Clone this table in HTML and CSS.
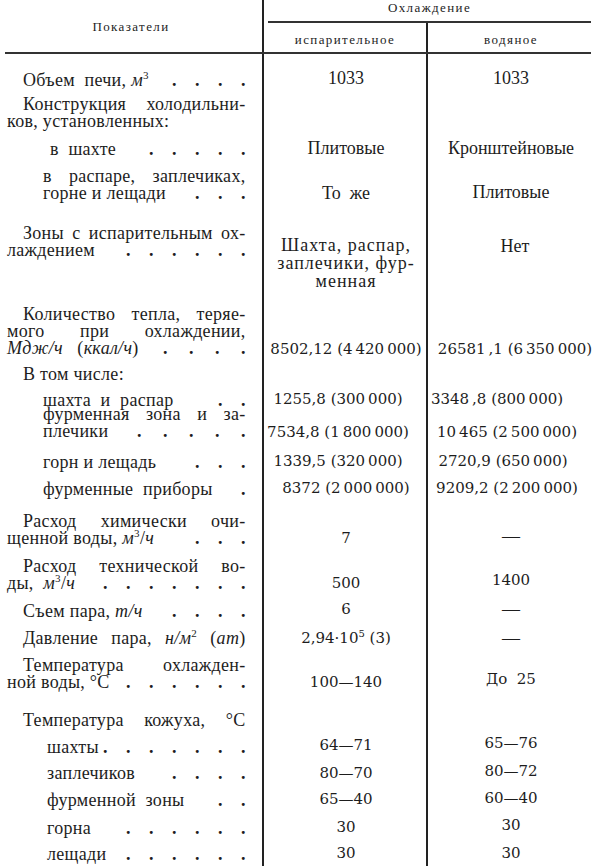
FILE: index.html
```html
<!DOCTYPE html>
<html lang="ru">
<head>
<meta charset="utf-8">
<title>Охлаждение доменной печи</title>
<link rel="stylesheet" href="styles.css">
</head>
<body>
<div class="page">
  <div class="head">
    <div class="h-label">Показатели</div>
    <div class="h-group">Охлаждение</div>
    <div class="h-sub h-sub1">испарительное</div>
    <div class="h-sub">водяное</div>
  </div>
  <div class="rule"></div>
  <div class="body">

    <div class="row p18">
      <div class="lab">
        <div class="ln d in1"><span class="lt">Объем&nbsp; печи, <i>м</i><sup class="sup">3</sup></span><span class="dots">. . . .</span></div>
      </div>
      <div class="val up2">1033</div>
      <div class="val up2">1033</div>
    </div>

    <div class="row p7">
      <div class="lab">
        <div class="ln j in1">Конструкция холодильни-</div>
        <div class="ln">ков, установленных:</div>
      </div>
    </div>

    <div class="row p11">
      <div class="lab">
        <div class="ln d in4"><span class="lt">в&nbsp; шахте</span><span class="dots">. . . . .</span></div>
      </div>
      <div class="val up1">Плитовые</div>
      <div class="val up1">Кронштейновые</div>
    </div>

    <div class="row p10">
      <div class="lab">
        <div class="ln j in2">в распаре, заплечиках,</div>
        <div class="ln d in2"><span class="lt">горне и лещади</span><span class="dots">. . .</span></div>
      </div>
      <div class="val dn17">То&nbsp; же</div>
      <div class="val dn16">Плитовые</div>
    </div>

    <div class="row p23">
      <div class="lab">
        <div class="ln j in1">Зоны с испарительным ох-</div>
        <div class="ln d"><span class="lt">лаждением</span><span class="dots">. . . . . .</span></div>
      </div>
      <div class="val dn11 lh18 spaced">
        <div>Шахта, распар,</div>
        <div>заплечики, фур-</div>
        <div>менная</div>
      </div>
      <div class="val dn13 sr4">Нет</div>
    </div>

    <div class="row p16">
      <div class="lab">
        <div class="ln j in1">Количество тепла, теряе-</div>
        <div class="ln j">мого при охлаждении,</div>
        <div class="ln d"><span class="lt"><i>Мдж/ч</i>&nbsp;&nbsp; (<i>ккал/ч</i>)</span><span class="dots w">. . . .</span></div>
      </div>
      <div class="val num dn35">8502,12 (4&thinsp;420&thinsp;000)</div>
      <div class="val num dn35 sr4">26581&thinsp;,1 (6&thinsp;350&thinsp;000)</div>
    </div>

    <div class="row p8">
      <div class="lab">
        <div class="ln in1">В том числе:</div>
      </div>
    </div>

    <div class="row p9">
      <div class="lab">
        <div class="ln d in2"><span class="lt">шахта&nbsp; и&nbsp; распар</span><span class="dots">. .</span></div>
      </div>
      <div class="val num up1 sl8">1255,8 (300&thinsp;000)</div>
      <div class="val num up1 sl14">3348&thinsp;,8 (800&thinsp;000)</div>
    </div>

    <div class="row pull3">
      <div class="lab">
        <div class="ln j in2">фурменная зона и за-</div>
        <div class="ln d in2"><span class="lt">плечики</span><span class="dots w">. . . . .</span></div>
      </div>
      <div class="val num dn18 sl8">7534,8 (1&thinsp;800&thinsp;000)</div>
      <div class="val num dn18 sl4">10&thinsp;465 (2&thinsp;500&thinsp;000)</div>
    </div>

    <div class="row p13">
      <div class="lab">
        <div class="ln d in2"><span class="lt">горн и лещадь</span><span class="dots">. . .</span></div>
      </div>
      <div class="val num up1 sl8">1339,5 (320&thinsp;000)</div>
      <div class="val num up1 sl8">2720,9 (650&thinsp;000)</div>
    </div>

    <div class="row p10">
      <div class="lab">
        <div class="ln d in2"><span class="lt">фурменные&nbsp; приборы</span><span class="dots">.</span></div>
      </div>
      <div class="val num up1">8372 (2&thinsp;000&thinsp;000)</div>
      <div class="val num up1 sl4">9209,2 (2&thinsp;200&thinsp;000)</div>
    </div>

    <div class="row p15">
      <div class="lab">
        <div class="ln j in1">Расход химически очи-</div>
        <div class="ln d"><span class="lt">щенной воды, <i>м</i><sup class="sup">3</sup>/<i>ч</i></span><span class="dots">. . .</span></div>
      </div>
      <div class="val num dn17">7</div>
      <div class="val dn15">—</div>
    </div>

    <div class="row p11">
      <div class="lab">
        <div class="ln j in1">Расход технической во-</div>
        <div class="ln d"><span class="lt">ды,&nbsp; <i>м</i><sup class="sup">3</sup>/<i>ч</i></span><span class="dots">. . . . . . .</span></div>
      </div>
      <div class="val num dn17">500</div>
      <div class="val num dn14">1400</div>
    </div>

    <div class="row p11">
      <div class="lab">
        <div class="ln d in1"><span class="lt">Съем пара, <i>т/ч</i></span><span class="dots">. . . .</span></div>
      </div>
      <div class="val num up2">6</div>
      <div class="val up2">—</div>
    </div>

    <div class="row p10">
      <div class="lab">
        <div class="ln j in1">Давление пара, <i>н/м</i><sup class="sup">2</sup> (<i>ат</i>)</div>
      </div>
      <div class="val num">2,94·10<sup class="sup-n">5</sup> (3)</div>
      <div class="val">—</div>
    </div>

    <div class="row p10">
      <div class="lab">
        <div class="ln j in1">Температура охлажден-</div>
        <div class="ln d"><span class="lt">ной воды, °С</span><span class="dots">. . . . . .</span></div>
      </div>
      <div class="val num dn17">100—140</div>
      <div class="val num dn14">До&nbsp; 25</div>
    </div>

    <div class="row p21">
      <div class="lab">
        <div class="ln j in1">Температура кожуха, °С</div>
      </div>
    </div>

    <div class="row p10">
      <div class="lab">
        <div class="ln d in3"><span class="lt">шахты</span><span class="dots">. . . . . . .</span></div>
      </div>
      <div class="val num up2">64—71</div>
      <div class="val num up4">65—76</div>
    </div>

    <div class="row p9">
      <div class="lab">
        <div class="ln d in3"><span class="lt">заплечиков</span><span class="dots">. . . .</span></div>
      </div>
      <div class="val num">80—70</div>
      <div class="val num up2">80—72</div>
    </div>

    <div class="row p10">
      <div class="lab">
        <div class="ln d in3"><span class="lt">фурменной&nbsp; зоны</span><span class="dots">. .</span></div>
      </div>
      <div class="val num up1">65—40</div>
      <div class="val num up2">60—40</div>
    </div>

    <div class="row p11">
      <div class="lab">
        <div class="ln d in3"><span class="lt">горна</span><span class="dots">. . . . . .</span></div>
      </div>
      <div class="val num up1">30</div>
      <div class="val num up3">30</div>
    </div>

    <div class="row p9">
      <div class="lab">
        <div class="ln d in3"><span class="lt">лещади</span><span class="dots">. . . . . .</span></div>
      </div>
      <div class="val num up1">30</div>
      <div class="val num up1">30</div>
    </div>

  </div>
</div>
</body>
</html>
```

FILE: styles.css
```css
* { box-sizing: border-box; }

html, body {
  margin: 0;
  padding: 0;
  background: #ffffff;
}

.page {
  width: 594px;
  height: 866px;
  display: flex;
  flex-direction: column;
  overflow: hidden;
  color: #1d1d1d;
  font-family: "Liberation Serif", "Times New Roman", serif;
  font-size: 18px;
  line-height: 17px;
  background: linear-gradient(90deg, transparent 262px, #222 262px, #222 264px, transparent 264px);
}

/* header */
.head {
  display: grid;
  grid-template-columns: 264px 164px 1fr;
  grid-template-rows: 23px 29px;
  font-size: 13px;
  line-height: 16px;
  letter-spacing: 1.4px;
  flex: none;
}

.h-label {
  grid-row: 1 / 3;
  text-align: center;
  padding-top: 19px;
  padding-right: 2px;
}

.h-group {
  grid-column: 2 / 4;
  text-align: center;
  margin: 0 3px 0 4px;
  border-bottom: 2px solid #333;
}

.h-sub {
  text-align: center;
  padding-top: 9px;
}

.h-sub1 {
  border-right: 2px solid #222;
}

.rule {
  flex: none;
  height: 2px;
  margin: 0 3px 0 5px;
  background: #333;
}

/* body */
.body {
  flex: 1;
  background: linear-gradient(90deg, transparent 426px, #222 426px, #222 428px, transparent 428px);
}

.row {
  display: grid;
  grid-template-columns: 264px 164px 1fr;
  align-items: start;
}

.lab {
  width: 264px;
  padding: 0 18.5px 0 7px;
  letter-spacing: 0.3px;
}

.ln { white-space: nowrap; }

.d {
  display: grid;
  grid-template-columns: auto 1fr;
  align-items: baseline;
}

.j {
  white-space: normal;
  text-align: justify;
  text-align-last: justify;
}

.in1 { padding-left: 16px; }
.in2 { padding-left: 36px; }
.in3 { padding-left: 40px; }
.in4 { padding-left: 43px; }

.dots {
  text-align: right;
  font-weight: bold;
  letter-spacing: 0;
  word-spacing: 14px;
}
.dots.w { word-spacing: 17px; }

.sup {
  font-size: 11px;
  line-height: 0;
  vertical-align: 7px;
}

.sup-n {
  font-size: 10px;
  line-height: 0;
  vertical-align: 6px;
}

.val { text-align: center; }

.num {
  font-family: "DejaVu Serif", "Liberation Serif", serif;
  font-size: 15px;
}

.spaced { letter-spacing: 1px; }
.lh18 { line-height: 18px; }

/* row spacing */
.p7 { padding-top: 7px; }
.p8 { padding-top: 8px; }
.p9 { padding-top: 9px; }
.p10 { padding-top: 10px; }
.p11 { padding-top: 11px; }
.p13 { padding-top: 13px; }
.p15 { padding-top: 15px; }
.p16 { padding-top: 16px; }
.p18 { padding-top: 18px; }
.p21 { padding-top: 21px; }
.p23 { padding-top: 23px; }
.pull3 { margin-top: -3px; }

/* value vertical offsets */
.up1 { margin-top: -1px; }
.up2 { margin-top: -2px; }
.up3 { margin-top: -3px; }
.up4 { margin-top: -4px; }
.dn11 { padding-top: 11px; }
.dn13 { padding-top: 13px; }
.dn14 { padding-top: 14px; }
.dn15 { padding-top: 15px; }
.dn16 { padding-top: 16px; }
.dn17 { padding-top: 17px; }
.dn18 { padding-top: 18px; }
.dn35 { padding-top: 35px; }

/* value horizontal shifts */
.sl4 { padding-right: 8px; }
.sl8 { padding-right: 16px; }
.sl14 { padding-right: 28px; }
.sr4 { padding-left: 8px; }
```
